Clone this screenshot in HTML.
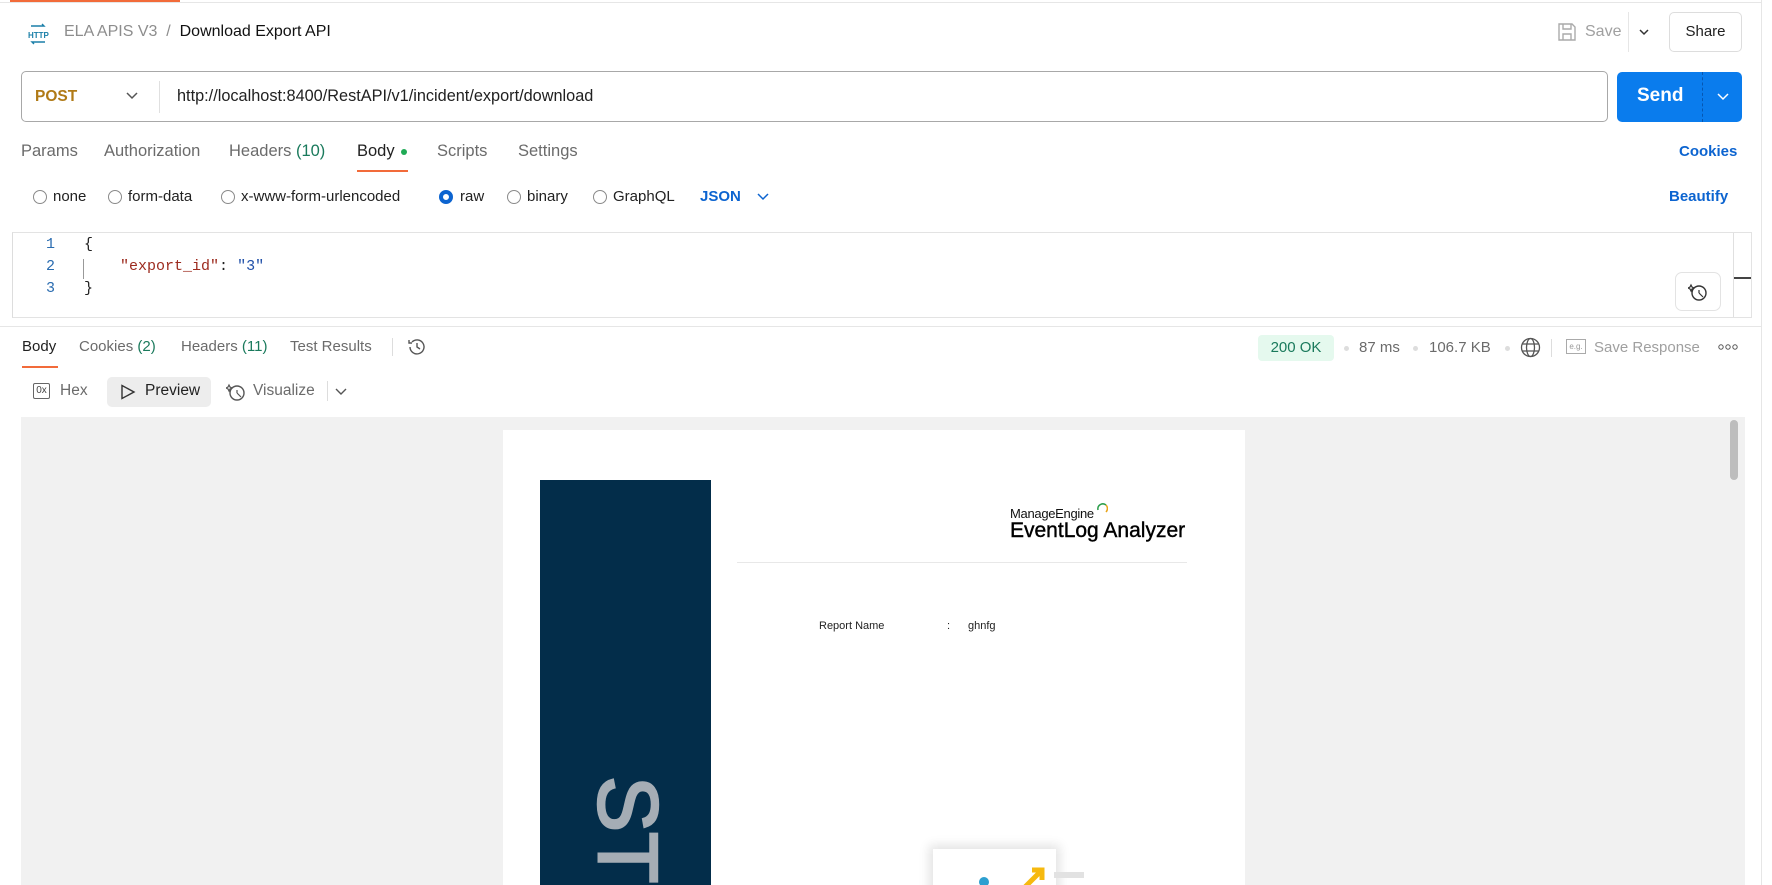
<!DOCTYPE html>
<html><head><meta charset="utf-8"><style>
*{box-sizing:border-box;margin:0;padding:0}
html,body{width:1772px;height:885px;overflow:hidden}
body{background:#fff;font-family:"Liberation Sans",sans-serif;color:#212121;position:relative}
.a{position:absolute;white-space:nowrap}
.t{font-size:16.5px;color:#6b6b6b}
.rad{position:absolute;width:14px;height:14px;border:1px solid #8a8a8a;border-radius:50%}
</style></head><body>
<div class="a" style="left:10px;top:0;width:170px;height:2px;background:#f26b3a"></div>
<div class="a" style="left:0;top:2px;width:1762px;height:1px;background:#e6e6e6"></div>
<div class="a" style="left:1761px;top:0;width:1px;height:885px;background:#e6e6e6"></div>

<svg class="a" style="left:27px;top:23px" width="22" height="22" viewBox="0 0 22 22"><path d="M4 3h13l-2-2M18 19H5l2 2" stroke="#1a7fa8" stroke-width="1.4" fill="none"/><text x="1" y="15" font-size="8" font-family="Liberation Sans" fill="#1a7fa8" font-weight="bold">HTTP</text></svg>
<div class="a" style="left:64px;top:23px;font-size:16px;color:#8d8d8d">ELA APIS V3&nbsp; /&nbsp; <span style="color:#111">Download Export API</span></div>

<svg class="a" style="left:1557px;top:22px" width="20" height="20" viewBox="0 0 20 20"><path d="M2 2h13l3 3v13H2z M6 2v5h8V2 M6 18v-6h8v6" stroke="#aaa" stroke-width="1.4" fill="none"/></svg>
<div class="a" style="left:1585px;top:23px;font-size:16px;color:#a0a0a0">Save</div>
<div class="a" style="left:1628px;top:12px;width:1px;height:40px;background:#e6e6e6"></div>
<svg class="a" style="left:1637px;top:25px" width="14" height="14"><path d="M3 5l4 4 4-4" stroke="#333" stroke-width="1.5" fill="none"/></svg>
<div class="a" style="left:1669px;top:12px;width:73px;height:40px;border:1px solid #ddd;border-radius:5px;font-size:15px;text-align:center;line-height:38px">Share</div>

<div class="a" style="left:21px;top:71px;width:1587px;height:51px;border:1px solid #a8a8a8;border-radius:5px"></div>
<div class="a" style="left:35px;top:88px;font-size:15.5px;font-weight:bold;color:#b07a16">POST</div>
<svg class="a" style="left:124px;top:89px" width="16" height="14"><path d="M3 4l5 5 5-5" stroke="#555" stroke-width="1.5" fill="none"/></svg>
<div class="a" style="left:159px;top:81px;width:1px;height:32px;background:#e0e0e0"></div>
<div class="a" style="left:177px;top:87px;font-size:16.3px;color:#212121">http://localhost:8400/RestAPI/v1/incident/export/download</div>
<div class="a" style="left:1617px;top:72px;width:125px;height:50px;background:#0a7ced;border-radius:5px"></div>
<div class="a" style="left:1702px;top:72px;width:1px;height:50px;border-left:1px dashed #0656b0"></div>
<div class="a" style="left:1637px;top:85px;font-size:19px;font-weight:bold;color:#fff">Send</div>
<svg class="a" style="left:1715px;top:91px" width="16" height="12"><path d="M3 3l5 5 5-5" stroke="#fff" stroke-width="1.5" fill="none"/></svg>

<div class="a t" style="left:21px;top:142px">Params</div>
<div class="a t" style="left:104px;top:142px">Authorization</div>
<div class="a t" style="left:229px;top:142px">Headers <span style="color:#1a7a5c">(10)</span></div>
<div class="a t" style="left:357px;top:142px;color:#212121">Body</div>
<div class="a" style="left:401px;top:149px;width:6px;height:6px;border-radius:50%;background:#1faa55"></div>
<div class="a" style="left:357px;top:170px;width:51px;height:2px;background:#f26b3a"></div>
<div class="a t" style="left:437px;top:142px">Scripts</div>
<div class="a t" style="left:518px;top:142px">Settings</div>
<div class="a" style="left:1679px;top:143px;font-size:15px;font-weight:bold;color:#0c64d0">Cookies</div>

<div class="rad" style="left:33px;top:190px"></div><div class="a" style="left:53px;top:188px;font-size:15px">none</div>
<div class="rad" style="left:108px;top:190px"></div><div class="a" style="left:128px;top:188px;font-size:15px">form-data</div>
<div class="rad" style="left:221px;top:190px"></div><div class="a" style="left:241px;top:188px;font-size:15px">x-www-form-urlencoded</div>
<div class="rad" style="left:439px;top:190px;border:4px solid #0c64d0"></div><div class="a" style="left:460px;top:188px;font-size:15px">raw</div>
<div class="rad" style="left:507px;top:190px"></div><div class="a" style="left:527px;top:188px;font-size:15px">binary</div>
<div class="rad" style="left:593px;top:190px"></div><div class="a" style="left:613px;top:188px;font-size:15px">GraphQL</div>
<div class="a" style="left:700px;top:188px;font-size:15px;font-weight:bold;color:#0c64d0">JSON</div>
<svg class="a" style="left:755px;top:191px" width="16" height="12"><path d="M3 3l5 5 5-5" stroke="#0c64d0" stroke-width="1.5" fill="none"/></svg>
<div class="a" style="left:1669px;top:188px;font-size:15px;font-weight:bold;color:#0c64d0">Beautify</div>

<div class="a" style="left:12px;top:232px;width:1740px;height:86px;border:1px solid #e3e3e3;border-left:1px solid #ddd"></div>
<div class="a" style="left:1733px;top:233px;width:1px;height:84px;background:#e0e0e0"></div>
<div class="a" style="left:1734px;top:277px;width:17px;height:2px;background:#444"></div>
<div class="a" style="font-family:'Liberation Mono',monospace;font-size:15px;line-height:22px;left:46px;top:234px;color:#2a6cb0">1<br>2<br>3</div>
<div class="a" style="font-family:'Liberation Mono',monospace;font-size:15px;line-height:22px;left:84px;top:234px;color:#212121">{<br>&nbsp;&nbsp;&nbsp;&nbsp;<span style="color:#9c2a1e">"export_id"</span>: <span style="color:#1f4fa8">"3"</span><br>}</div>
<div class="a" style="left:83px;top:259px;width:1px;height:20px;background:#999"></div>
<div class="a" style="left:1675px;top:272px;width:46px;height:39px;border:1px solid #e3e3e3;border-radius:7px"></div>
<svg class="a" style="left:1688px;top:282px" width="20" height="20" viewBox="0 0 20 20"><circle cx="11" cy="11" r="7" stroke="#333" stroke-width="1.4" fill="none"/><path d="M11 11l4 4M11 8v3M3 3l1 2 2 1-2 1-1 2-1-2-2-1 2-1z" stroke="#333" stroke-width="1.2" fill="none"/></svg>

<div class="a" style="left:0;top:326px;width:1762px;height:1px;background:#e6e6e6"></div>
<div class="a t" style="left:22px;top:338px;color:#212121;font-size:15px">Body</div>
<div class="a" style="left:22px;top:366px;width:36px;height:2px;background:#f26b3a"></div>
<div class="a t" style="left:79px;top:338px;font-size:15px">Cookies <span style="color:#1a7a5c">(2)</span></div>
<div class="a t" style="left:181px;top:338px;font-size:15px">Headers <span style="color:#1a7a5c">(11)</span></div>
<div class="a t" style="left:290px;top:338px;font-size:15px">Test Results</div>
<div class="a" style="left:392px;top:338px;width:1px;height:18px;background:#ddd"></div>
<svg class="a" style="left:407px;top:337px" width="20" height="20" viewBox="0 0 20 20"><path d="M3 10a7 7 0 1 0 2-5M2 3v3h3M10 6v4l3 2" stroke="#555" stroke-width="1.4" fill="none"/></svg>

<div class="a" style="left:1258px;top:335px;width:76px;height:26px;background:#e5f9ee;border-radius:4px;color:#1a7a5c;font-size:15px;text-align:center;line-height:26px">200 OK</div>
<div class="a" style="left:1344px;top:346px;width:5px;height:5px;border-radius:50%;background:#ddd"></div>
<div class="a t" style="left:1359px;top:339px;font-size:15px">87 ms</div>
<div class="a" style="left:1413px;top:346px;width:5px;height:5px;border-radius:50%;background:#ddd"></div>
<div class="a t" style="left:1429px;top:339px;font-size:15px">106.7 KB</div>
<div class="a" style="left:1505px;top:346px;width:5px;height:5px;border-radius:50%;background:#ddd"></div>
<svg class="a" style="left:1520px;top:337px" width="21" height="21" viewBox="0 0 21 21"><circle cx="10.5" cy="10.5" r="9" stroke="#555" stroke-width="1.3" fill="none"/><ellipse cx="10.5" cy="10.5" rx="4" ry="9" stroke="#555" stroke-width="1.3" fill="none"/><path d="M2 7h17M2 14h17" stroke="#555" stroke-width="1.3"/></svg>
<div class="a" style="left:1551px;top:339px;width:1px;height:18px;background:#ddd"></div>
<div class="a" style="left:1566px;top:339px;width:20px;height:15px;border:1px solid #aaa;font-size:8px;color:#999;text-align:center;line-height:13px">e.g.</div>
<div class="a" style="left:1594px;top:339px;font-size:15px;color:#a0a0a0">Save Response</div>
<svg class="a" style="left:1718px;top:343px" width="20" height="8"><circle cx="3" cy="4" r="2.2" stroke="#555" fill="none"/><circle cx="10" cy="4" r="2.2" stroke="#555" fill="none"/><circle cx="17" cy="4" r="2.2" stroke="#555" fill="none"/></svg>

<div class="a" style="left:33px;top:383px;width:17px;height:16px;border:1px solid #666;border-radius:2px;font-size:10px;color:#444;line-height:14px;text-align:center">0x</div>
<div class="a t" style="left:60px;top:382px;font-size:15.5px">Hex</div>
<div class="a" style="left:107px;top:377px;width:104px;height:30px;background:#ededed;border-radius:5px"></div>
<svg class="a" style="left:120px;top:384px" width="16" height="16"><path d="M2 1.5l12 6.5-12 6.5z" stroke="#333" stroke-width="1.4" fill="none"/></svg>
<div class="a" style="left:145px;top:382px;font-size:15.5px;color:#212121">Preview</div>
<svg class="a" style="left:226px;top:382px" width="20" height="20" viewBox="0 0 20 20"><circle cx="11" cy="11" r="7" stroke="#555" stroke-width="1.4" fill="none"/><path d="M11 11l4 4M11 8v3M3 3l1 2 2 1-2 1-1 2-1-2-2-1 2-1z" stroke="#555" stroke-width="1.2" fill="none"/></svg>
<div class="a t" style="left:253px;top:382px;font-size:15.5px">Visualize</div>
<div class="a" style="left:327px;top:381px;width:1px;height:20px;background:#ddd"></div>
<svg class="a" style="left:334px;top:386px" width="14" height="12"><path d="M2 3l5 5 5-5" stroke="#555" stroke-width="1.4" fill="none"/></svg>

<div class="a" style="left:21px;top:417px;width:1724px;height:468px;background:#f1f1f1;overflow:hidden">
  <div class="a" style="left:1709px;top:3px;width:8px;height:60px;background:#bdbdbd;border-radius:4px"></div>
  <div class="a" style="left:482px;top:13px;width:742px;height:455px;background:#fff;overflow:hidden">
    <div class="a" style="left:37px;top:50px;width:171px;height:410px;background:#032d4a;overflow:hidden">
      <div class="a" style="left:84px;top:296px;writing-mode:vertical-rl;font-size:84px;color:#a5adb5;line-height:84px;transform:translateX(-38px);-webkit-text-stroke:2.5px #a5adb5">STS</div>
    </div>
    <div class="a" style="left:507px;top:76px;font-size:13px;color:#111;letter-spacing:-0.3px">ManageEngine</div>
    <svg class="a" style="left:593px;top:72px" width="12" height="12"><path d="M2 8a5 5 0 0 1 8-5" stroke="#2a9d4a" stroke-width="1.5" fill="none"/><path d="M10 3a5 5 0 0 1 0 7" stroke="#e8a317" stroke-width="1.5" fill="none"/></svg>
    <div class="a" style="left:507px;top:89px;font-size:21px;color:#000;-webkit-text-stroke:0.4px #000">EventLog Analyzer</div>
    <div class="a" style="left:234px;top:132px;width:450px;height:1px;background:#e8e8e8"></div>
    <div class="a" style="left:316px;top:190px;font-size:11px;color:#222">Report Name</div>
    <div class="a" style="left:444px;top:190px;font-size:11px;color:#222">:</div>
    <div class="a" style="left:465px;top:190px;font-size:11px;color:#222">ghnfg</div>
    <div class="a" style="left:430px;top:419px;width:123px;height:60px;background:#fff;box-shadow:0 0 10px 4px #e4e4e4"></div>
    <div class="a" style="left:551px;top:442px;width:30px;height:6px;background:#e2e2e2"></div>
    <div class="a" style="left:476px;top:447px;width:10px;height:10px;border-radius:50%;background:#2d9fd0"></div>
    <svg class="a" style="left:519px;top:436px" width="24" height="24"><path d="M2 22L20 4M10 4h10v10" stroke="#f6b90f" stroke-width="5" fill="none"/></svg>
  </div>
</div>
</body></html>
